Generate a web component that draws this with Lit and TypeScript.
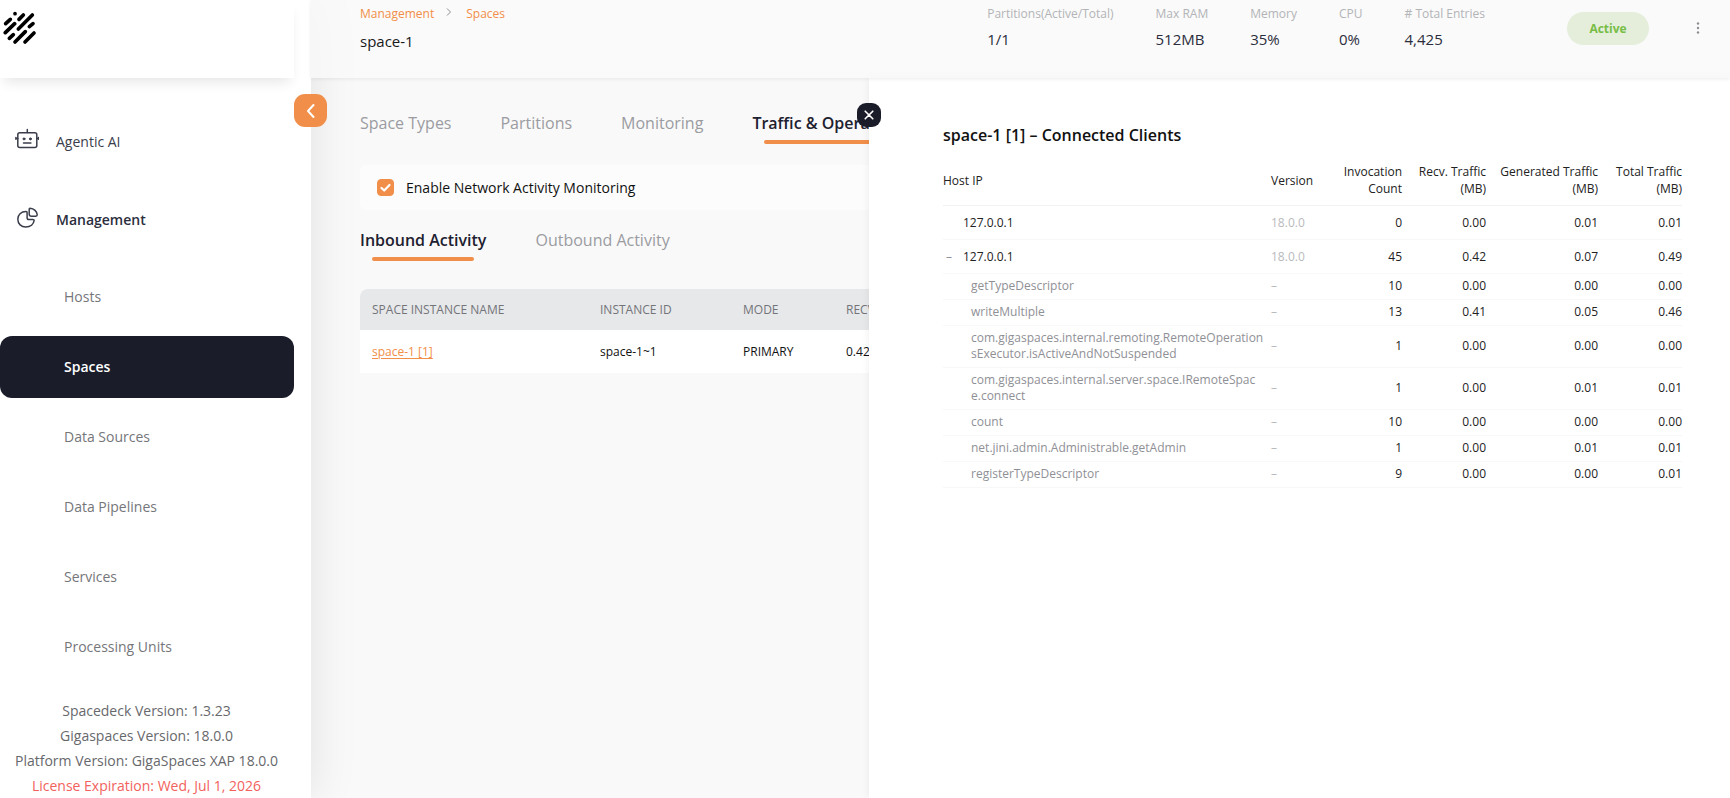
import { LitElement, html, css, svg, nothing } from "lit";
import { customElement, state } from "lit/decorators.js";
import { classMap } from "lit/directives/class-map.js";

interface ClientRow {
  name: string;
  version: string;
  values: string[];
  kind: "host" | "group" | "call";
}

const NAV = ["Hosts", "Spaces", "Data Sources", "Data Pipelines", "Services", "Processing Units"];

const STATS: [string, string][] = [
  ["Partitions(Active/Total)", "1/1"],
  ["Max RAM", "512MB"],
  ["Memory", "35%"],
  ["CPU", "0%"],
  ["# Total Entries", "4,425"],
];

const CLIENTS: ClientRow[] = [
  { kind: "host", name: "127.0.0.1", version: "18.0.0", values: ["0", "0.00", "0.01", "0.01"] },
  { kind: "group", name: "127.0.0.1", version: "18.0.0", values: ["45", "0.42", "0.07", "0.49"] },
  { kind: "call", name: "getTypeDescriptor", version: "–", values: ["10", "0.00", "0.00", "0.00"] },
  { kind: "call", name: "writeMultiple", version: "–", values: ["13", "0.41", "0.05", "0.46"] },
  { kind: "call", name: "com.gigaspaces.internal.remoting.RemoteOperationsExecutor.isActiveAndNotSuspended", version: "–", values: ["1", "0.00", "0.00", "0.00"] },
  { kind: "call", name: "com.gigaspaces.internal.server.space.IRemoteSpace.connect", version: "–", values: ["1", "0.00", "0.01", "0.01"] },
  { kind: "call", name: "count", version: "–", values: ["10", "0.00", "0.00", "0.00"] },
  { kind: "call", name: "net.jini.admin.Administrable.getAdmin", version: "–", values: ["1", "0.00", "0.01", "0.01"] },
  { kind: "call", name: "registerTypeDescriptor", version: "–", values: ["9", "0.00", "0.00", "0.01"] },
];

const LOGO_STROKES = [
  "M45 41h.1", "M57 58L70 45", "M17 71L31 58", "M55 87L97 45", "M16 98L44 71",
  "M88 80L99 71", "M28 115L40 104", "M45 126L76 95", "M75 126L102 99",
];

const base = css`
  *, *::before, *::after { box-sizing: border-box; }
  a { color: inherit; text-decoration: none; }
  ul { list-style: none; margin: 0; padding: 0; }
  button { font: inherit; color: inherit; border: 0; background: none; padding: 0; cursor: pointer; }
  svg { display: block; }
`;

@customElement("side-nav")
class SideNav extends LitElement {
  static styles = [base, css`
    :host {
      display: flex; flex-direction: column; position: relative; z-index: 2; background: #fff;
      box-shadow: 0 0 45px rgba(0, 0, 0, 0.1);
    }
    .brand {
      height: 78px; margin-right: 17px; padding: 11px 3px;
      box-shadow: 0 8px 12px -4px rgba(0, 0, 0, 0.1);
    }
    .nav { padding: 25px 17px 16px 0; }
    .section { display: flex; align-items: center; gap: 17px; height: 78px; padding-left: 15px; color: #3a3d4b; }
    .section svg { margin-bottom: 6px; }
    .section.current { font-weight: 600; color: #2b2e3d; }
    .items { display: grid; gap: 8px; margin-top: 7px; }
    .item { display: flex; align-items: center; height: 62px; padding-left: 64px; color: #75767a; border-radius: 12px; }
    .item.current { background: #1a1c2a; color: #fff; font-weight: 600; }
    .versions { margin-top: auto; padding-right: 18px; text-align: center; line-height: 25px; color: #67686c; }
    .license { color: #f2625c; }
    .collapse {
      position: absolute; top: 94px; right: -16px; width: 33px; height: 33px; border-radius: 11px;
      background: #f18e49; display: grid; place-items: center;
    }
  `];

  render() {
    return html`
      <div class="brand">
        <svg width="34" height="34" viewBox="9 33 102 102" fill="none" stroke="#000" stroke-width="11" stroke-linecap="round" role="img" aria-label="GigaSpaces">
          ${LOGO_STROKES.map((d) => svg`<path d=${d} />`)}
        </svg>
      </div>
      <nav class="nav">
        <a class="section" href="#">
          <svg width="24" height="24" viewBox="0 0 24 24" fill="none" stroke="#3a3d4b" stroke-width="1.5" stroke-linecap="round" aria-hidden="true">
            <rect x="2.8" y="5.8" width="19" height="14.6" rx="2" />
            <path d="M12.3 2.4v3.2M.9 10.6v1.6M23.4 10.6v1.6M1 11.4h1.8M21.8 11.4h1.6M8.5 16h7.4" />
            <circle cx="9" cy="11.9" r="1" fill="#3a3d4b" stroke-width="1" />
            <circle cx="15.4" cy="11.9" r="1" fill="#3a3d4b" stroke-width="1" />
          </svg>
          Agentic AI
        </a>
        <a class="section current" href="#">
          <svg width="24" height="24" viewBox="0 0 24 24" fill="none" stroke="#3a3d4b" stroke-width="1.5" stroke-linejoin="round" aria-hidden="true">
            <path d="M11 6.5C6 6.5 2.8 10 2.8 14c0 5 3.5 8 8 8 4.8 0 7.8-3 8.3-6.3q.1-1.2-1.2-1.2h-4q-1.8 0-1.8-1.8V7.8Q12.1 6.5 11 6.5Z" />
            <path d="M15 3.3c4 .3 7 3.2 7.2 6.5q0 1.3-1.4 1.4h-4.3q-2.3 0-2.3-2.3V4.3q0-1 .8-1z" />
          </svg>
          Management
        </a>
        <ul class="items">
          ${NAV.map((n) => html`<li><a class=${classMap({ item: true, current: n === "Spaces" })} href="#">${n}</a></li>`)}
        </ul>
      </nav>
      <div class="versions">
        <div>Spacedeck Version: 1.3.23</div>
        <div>Gigaspaces Version: 18.0.0</div>
        <div>Platform Version: GigaSpaces XAP 18.0.0</div>
        <div class="license">License Expiration: Wed, Jul 1, 2026</div>
      </div>
      <button class="collapse" aria-label="Collapse menu">
        <svg width="12" height="16" viewBox="0 0 12 16" fill="none" stroke="#fff" stroke-width="2" stroke-linecap="round" stroke-linejoin="round" aria-hidden="true"><path d="M8.5 2L3 8l5.5 6" /></svg>
      </button>
    `;
  }
}

@customElement("space-header")
class SpaceHeader extends LitElement {
  static styles = [base, css`
    :host {
      display: flex; align-items: flex-start; position: relative; z-index: 3; height: 78px;
      padding: 5px 20px 0 49px; background: rgba(250, 250, 250, 0.75);
      box-shadow: 0 1px 4px rgba(0, 0, 0, 0.08);
    }
    .crumbs { display: flex; align-items: center; font-size: 12px; line-height: 18px; color: #f18e49; }
    .crumbs svg { margin: 0 14px 4px 12px; }
    .title { margin: 0; font-size: 15px; line-height: 36px; font-weight: 400; color: #18181b; }
    .stats { display: flex; gap: 42px; margin: 0 82px 0 auto; }
    .label { font-size: 12px; line-height: 18px; color: #b3b4b7; }
    .value { margin: 0; font-size: 15px; line-height: 32px; color: #2b2d3c; }
    .status {
      margin-top: 7px; width: 82px; border-radius: 17px; background: #e4eedb; color: #78bd45;
      font-size: 12px; line-height: 33px; font-weight: 700; text-align: center;
    }
    .more { width: 24px; height: 24px; margin: 11px 0 0 37px; display: grid; place-items: center; }
  `];

  render() {
    return html`
      <div>
        <nav class="crumbs" aria-label="Breadcrumb">
          <a href="#">Management</a>
          <svg width="6" height="8" viewBox="0 0 6 8" fill="none" stroke="#8c8d91" stroke-width="1" aria-hidden="true"><path d="M1 .5L4.5 4 1 7.5" /></svg>
          <a href="#">Spaces</a>
        </nav>
        <h1 class="title">space-1</h1>
      </div>
      <dl class="stats">
        ${STATS.map(([l, v]) => html`<div><dt class="label">${l}</dt><dd class="value">${v}</dd></div>`)}
      </dl>
      <div class="status">Active</div>
      <button class="more" aria-label="More actions">
        <svg width="4" height="12" viewBox="0 0 4 12" fill="#8c8d91" aria-hidden="true"><circle cx="2" cy="1.5" r="1.2" /><circle cx="2" cy="6" r="1.2" /><circle cx="2" cy="10.5" r="1.2" /></svg>
      </button>
    `;
  }
}

@customElement("space-activity")
class SpaceActivity extends LitElement {
  static styles = [base, css`
    :host { display: block; padding: 33px 49px 0; overflow: hidden; min-width: 0; }
    .tabs { display: flex; gap: 49px; }
    .tab { position: relative; padding-bottom: 9px; font-size: 16px; line-height: 24px; color: #9b9ca1; white-space: nowrap; }
    .tab.current { font-weight: 600; color: #1e2130; }
    .tab.current::after {
      content: ""; position: absolute; left: 12px; right: 12px; bottom: 0; height: 4px;
      border-radius: 2px; background: #f18e49;
    }
    .option { display: flex; align-items: center; gap: 12px; height: 45px; margin: 21px 0 18px; padding: 0 17px; border-radius: 6px; background: #fcfcfc; color: #111; }
    .check { display: grid; }
    .check input, .check svg { grid-area: 1 / 1; width: 17px; height: 17px; margin: 0; }
    .check input { appearance: none; border-radius: 4px; border: 1px solid #f18e49; background: #fff; }
    .check input:checked { background: #f18e49; }
    .check svg { pointer-events: none; }
    .instances { width: 100%; min-width: 850px; margin-top: 28px; border-collapse: collapse; font-size: 12px; text-align: left; table-layout: fixed; }
    .instances th { height: 41px; padding: 0 12px; background: #e7e8ea; color: #737479; font-weight: 400; white-space: nowrap; }
    .instances th:first-child { width: 228px; border-top-left-radius: 8px; }
    .instances th:nth-child(2) { width: 143px; }
    .instances th:nth-child(3) { width: 103px; }
    .instances td { height: 43px; padding: 0 12px; background: #fff; color: #111; }
    .instances a { color: #f18e49; text-decoration: underline; text-underline-offset: 2px; }
  `];

  private tab(label: string, current = false) {
    return html`<button class=${classMap({ tab: true, current })} role="tab" aria-selected=${current}>${label}</button>`;
  }

  render() {
    return html`
      <div class="tabs" role="tablist">
        ${this.tab("Space Types")}${this.tab("Partitions")}${this.tab("Monitoring")}${this.tab("Traffic & Operations", true)}
      </div>
      <div class="option">
        <span class="check">
          <input id="monitor" type="checkbox" checked />
          <svg viewBox="0 0 17 17" fill="none" stroke="#fff" stroke-width="2.2" stroke-linecap="round" stroke-linejoin="round" aria-hidden="true"><path d="M4.5 9l2.7 2.5L12.5 6" /></svg>
        </span>
        <label for="monitor">Enable Network Activity Monitoring</label>
      </div>
      <div class="tabs" role="tablist">
        ${this.tab("Inbound Activity", true)}${this.tab("Outbound Activity")}
      </div>
      <table class="instances">
        <thead><tr><th>SPACE INSTANCE NAME</th><th>INSTANCE ID</th><th>MODE</th><th>RECV. TRAFFIC (MB)</th></tr></thead>
        <tbody><tr><td><a href="#">space-1 [1]</a></td><td>space-1~1</td><td>PRIMARY</td><td>0.42</td></tr></tbody>
      </table>
    `;
  }
}

@customElement("clients-drawer")
class ClientsDrawer extends LitElement {
  @state() private open = true;

  static styles = [base, css`
    :host {
      position: absolute; top: 78px; right: 0; bottom: 0; z-index: 2; width: 861px; max-width: 100%;
      padding: 45px 48px 0 74px; background: #fff; box-shadow: 0 0 8px rgba(0, 0, 0, 0.07);
    }
    .close {
      position: absolute; top: 25px; left: -12px; width: 24px; height: 24px; border-radius: 9px;
      background: #1a1c2a; display: grid; place-items: center;
    }
    .title { margin: 0 0 8px; font-size: 16px; line-height: 24px; font-weight: 600; color: #111; }
    .clients { width: 100%; table-layout: fixed; border-collapse: separate; border-spacing: 0; font-size: 12px; line-height: 17px; color: #222; }
    .clients th, .clients td { padding: 8px 0; border-bottom: 1px solid #f8f8f9; text-align: right; font-weight: 400; }
    .clients thead th { border-bottom-color: #f2f2f3; white-space: nowrap; }
    .clients .name, .clients .version { text-align: left; }
    .clients td.version { color: #b9babe; }
    .host .name { display: grid; grid-template-columns: 20px 1fr; }
    .clients .call th, .clients .call td { padding-top: 4px; padding-bottom: 5px; line-height: 16px; }
    .clients .call .name { padding-left: 28px; padding-right: 6px; color: #8f9096; word-break: break-all; }
    .toggle { color: #8f9096; line-height: 17px; width: 12px; }
    .version-col { width: 59px; }
    .count-col { width: 72px; }
    .recv-col { width: 84px; }
    .gen-col { width: 112px; }
    .total-col { width: 84px; }
  `];

  private row(r: ClientRow) {
    const call = r.kind === "call";
    if (call && !this.open) return nothing;
    return html`
      <tr class=${call ? "call" : "host"}>
        <th class="name" scope="row">
          ${call ? r.name : html`
            <span>${r.kind === "group" ? html`<button class="toggle" aria-label="Toggle calls" @click=${() => { this.open = !this.open; }}>${this.open ? "–" : "+"}</button>` : nothing}</span>
            <span>${r.name}</span>`}
        </th>
        <td class="version">${r.version}</td>
        ${r.values.map((v) => html`<td>${v}</td>`)}
      </tr>`;
  }

  render() {
    return html`
      <button class="close" aria-label="Close">
        <svg width="10" height="10" viewBox="0 0 10 10" stroke="#fff" stroke-width="1.6" stroke-linecap="round" aria-hidden="true"><path d="M1.2 1.2l7.6 7.6M8.8 1.2L1.2 8.8" /></svg>
      </button>
      <h2 class="title">space-1 [1] – Connected Clients</h2>
      <table class="clients">
        <colgroup><col /><col class="version-col" /><col class="count-col" /><col class="recv-col" /><col class="gen-col" /><col class="total-col" /></colgroup>
        <thead>
          <tr>
            <th class="name">Host IP</th><th class="version">Version</th><th>Invocation<br />Count</th>
            <th>Recv. Traffic<br />(MB)</th><th>Generated Traffic<br />(MB)</th><th>Total Traffic<br />(MB)</th>
          </tr>
        </thead>
        <tbody>${CLIENTS.map((r) => this.row(r))}</tbody>
      </table>
    `;
  }
}

@customElement("app-root")
class AppRoot extends LitElement {
  static styles = [base, css`
    :host {
      display: grid; grid-template-columns: 311px minmax(0, 1fr); min-height: 100vh; background: #f9f9f9;
      font-family: "Open Sans", "Noto Sans", sans-serif; font-size: 14px; line-height: 20px;
    }
    .main { position: relative; display: flex; flex-direction: column; }
  `];

  render() {
    return html`
      <side-nav></side-nav>
      <main class="main">
        <space-header></space-header>
        <space-activity></space-activity>
        <clients-drawer></clients-drawer>
      </main>
    `;
  }
}
